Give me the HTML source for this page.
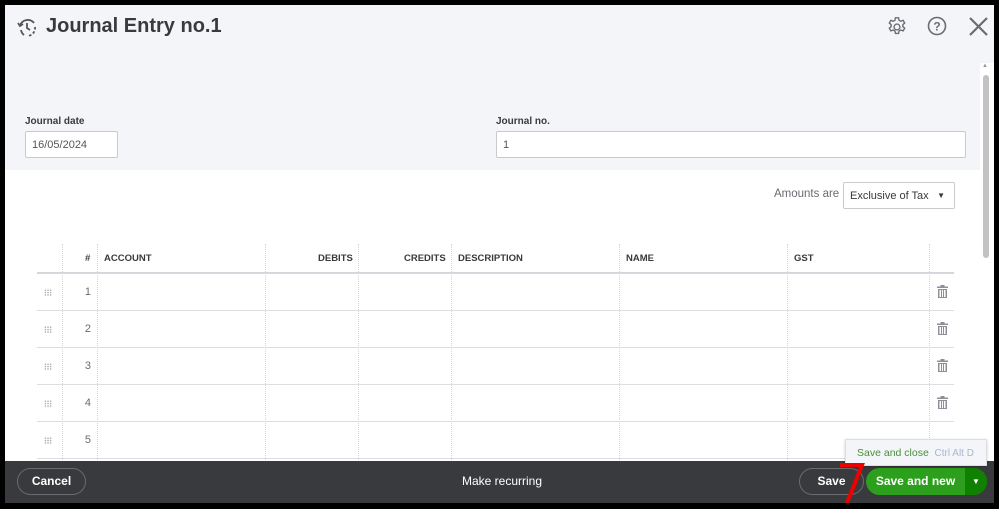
<!DOCTYPE html>
<html><head><meta charset="utf-8"><style>
*{box-sizing:border-box;margin:0;padding:0}
body{width:999px;height:509px;background:#000;position:relative;overflow:hidden;font-family:"Liberation Sans",sans-serif;color:#393a3d}
#win{position:absolute;left:5px;top:5px;width:989px;height:498px;background:#fff;overflow:hidden}
.gray{position:absolute;left:0;top:0;width:989px;height:165px;background:#f4f5f8}
.abs{position:absolute}
.lbl{font-size:10px;font-weight:bold;color:#393a3d}
.inp{position:absolute;background:#fff;border:1px solid #c9cacc;border-radius:2px;font-size:11px;color:#555;padding:7px 6px}
.th{position:absolute;top:248px;font-size:9.5px;font-weight:bold;color:#393a3d}
.vl{position:absolute;top:239px;height:220px;border-left:1px dotted #d4d7dc}
.hl{position:absolute;left:32px;width:917px;border-top:1px solid #dcdee2}
.num{position:absolute;left:64px;width:22px;text-align:right;font-size:11px;color:#6b6c72}
.grip{position:absolute;left:39px;width:8px;height:7px;background-image:radial-gradient(#999 0.6px,transparent 0.8px);background-size:2.7px 2.4px}
.trash{position:absolute;left:932px}
#foot{position:absolute;left:0;top:456px;width:989px;height:42px;background:#393a3d}
</style></head><body>
<div id="win">
<div class="gray"></div>
<div class="abs" style="left:975px;top:58px;width:14px;height:398px;background:#fff"></div>
<div class="abs" style="left:978px;top:70px;width:6px;height:183px;background:#c2c2c2;border-radius:3px"></div>
<div class="abs" style="left:977px;top:58px;font-size:6px;color:#999">▲</div>
<svg class="abs" style="left:11px;top:12px" width="22" height="22" viewBox="0 0 22 22" fill="none" stroke="#555" stroke-width="1.8"><path d="M4 9A8 8 0 0 1 18 6" /><path d="M19 10A8 8 0 0 1 12 19" stroke-dasharray="2.5 2"/><path d="M5 13A8 8 0 0 0 8 18"/><path d="M11 6v5l3 2"/><path d="M2 6l2 3 3-2"/></svg>
<div class="abs" style="left:41px;top:10px;font-size:20px;font-weight:bold;color:#393a3d">Journal Entry no.1</div>
<svg class="abs" style="left:881px;top:11px" width="22" height="22" viewBox="0 0 24 24" fill="none" stroke="#6b6c72" stroke-width="1.5"><circle cx="12" cy="12" r="3.2"/><path d="M10.3 2h3.4l.5 2.6 2 1.1 2.5-.9 1.7 2.9-2 1.7v2.2l2 1.7-1.7 2.9-2.5-.9-2 1.1-.5 2.6h-3.4l-.5-2.6-2-1.1-2.5.9-1.7-2.9 2-1.7v-2.2l-2-1.7 1.7-2.9 2.5.9 2-1.1z"/></svg>
<svg class="abs" style="left:922px;top:11px" width="20" height="20" viewBox="0 0 20 20" fill="none" stroke="#6b6c72" stroke-width="1.6"><circle cx="10" cy="10" r="8.5"/><text x="10" y="14.5" font-size="12" text-anchor="middle" fill="#6b6c72" stroke="none" font-family="Liberation Sans" font-weight="bold">?</text></svg>
<svg class="abs" style="left:963px;top:11px" width="21" height="21" viewBox="0 0 21 21" stroke="#6b6c72" stroke-width="2.2"><path d="M2 2L19 19M19 2L2 19"/></svg>

<div class="abs lbl" style="left:20px;top:111px">Journal date</div>
<div class="inp" style="left:20px;top:126px;width:93px;height:27px">16/05/2024</div>
<div class="abs lbl" style="left:491px;top:111px">Journal no.</div>
<div class="inp" style="left:491px;top:126px;width:470px;height:27px">1</div>

<div class="abs" style="left:769px;top:183px;font-size:11.5px;color:#6b6c72">Amounts are</div>
<div class="inp" style="left:838px;top:177px;width:112px;height:27px;color:#393a3d">Exclusive of Tax<span style="position:absolute;right:9px;top:8px;font-size:8px">▼</span></div>

<div class="vl" style="left:57px"></div><div class="vl" style="left:92px"></div><div class="vl" style="left:260px"></div><div class="vl" style="left:353px"></div><div class="vl" style="left:446px"></div><div class="vl" style="left:614px"></div><div class="vl" style="left:782px"></div><div class="vl" style="left:924px"></div>
<div class="th" style="left:80px">#</div>
<div class="th" style="left:99px">ACCOUNT</div>
<div class="th" style="left:313px">DEBITS</div>
<div class="th" style="left:399px">CREDITS</div>
<div class="th" style="left:453px">DESCRIPTION</div>
<div class="th" style="left:621px">NAME</div>
<div class="th" style="left:789px">GST</div>
<div class="hl" style="top:267px;border-top:2px solid #d4d7dc"></div>
<div class="hl" style="top:305px"></div><div class="hl" style="top:342px"></div><div class="hl" style="top:379px"></div><div class="hl" style="top:416px"></div><div class="hl" style="top:453px"></div>

<div class="grip" style="top:284px"></div><div class="num" style="top:281px">1</div>
<div class="grip" style="top:321px"></div><div class="num" style="top:318px">2</div>
<div class="grip" style="top:358px"></div><div class="num" style="top:355px">3</div>
<div class="grip" style="top:395px"></div><div class="num" style="top:392px">4</div>
<div class="grip" style="top:432px"></div><div class="num" style="top:429px">5</div>

<svg class="trash" style="top:280px" width="11" height="13" viewBox="0 0 11 13" fill="#8d9096"><rect x="0" y="1.5" width="11" height="1.5"/><rect x="3.5" y="0" width="4" height="1.5"/><path d="M1 4h9v9H1zM2.5 5v7h1.5V5zM5 5v7h1V5zM7 5v7h1.5V5z" fill-rule="evenodd"/></svg>
<svg class="trash" style="top:317px" width="11" height="13" viewBox="0 0 11 13" fill="#8d9096"><rect x="0" y="1.5" width="11" height="1.5"/><rect x="3.5" y="0" width="4" height="1.5"/><path d="M1 4h9v9H1zM2.5 5v7h1.5V5zM5 5v7h1V5zM7 5v7h1.5V5z" fill-rule="evenodd"/></svg>
<svg class="trash" style="top:354px" width="11" height="13" viewBox="0 0 11 13" fill="#8d9096"><rect x="0" y="1.5" width="11" height="1.5"/><rect x="3.5" y="0" width="4" height="1.5"/><path d="M1 4h9v9H1zM2.5 5v7h1.5V5zM5 5v7h1V5zM7 5v7h1.5V5z" fill-rule="evenodd"/></svg>
<svg class="trash" style="top:391px" width="11" height="13" viewBox="0 0 11 13" fill="#8d9096"><rect x="0" y="1.5" width="11" height="1.5"/><rect x="3.5" y="0" width="4" height="1.5"/><path d="M1 4h9v9H1zM2.5 5v7h1.5V5zM5 5v7h1V5zM7 5v7h1.5V5z" fill-rule="evenodd"/></svg>

<div id="foot">
<div class="abs" style="left:12px;top:7px;width:69px;height:27px;border:1px solid #6b6c72;border-radius:14px;color:#fff;font-weight:bold;font-size:12px;text-align:center;line-height:25px">Cancel</div>
<div class="abs" style="left:457px;top:13px;color:#fff;font-size:12px">Make recurring</div>
<div class="abs" style="left:794px;top:7px;width:65px;height:27px;border:1px solid #6b6c72;border-radius:14px;color:#fff;font-weight:bold;font-size:12px;text-align:center;line-height:25px">Save</div>
<div class="abs" style="left:861px;top:7px;width:121px;height:27px;background:#2ca01c;border-radius:14px;overflow:hidden">
<div class="abs" style="left:0;top:0;width:99px;height:27px;color:#fff;font-weight:bold;font-size:12px;text-align:center;line-height:27px">Save and new</div>
<div class="abs" style="left:99px;top:0;width:22px;height:27px;background:#108000;color:#fff;font-size:8px;text-align:center;line-height:27px">▼</div>
</div>
</div>
<div class="abs" style="left:840px;top:434px;width:142px;height:27px;background:#f4f5f8;border:1px solid #dcdee2;box-shadow:0 1px 3px rgba(0,0,0,.2);font-size:10.5px;padding:7px 11px;white-space:nowrap"><span style="color:#4a8f3a">Save and close</span> <span style="color:#a7b6d0;font-size:10px">&nbsp;Ctrl Alt D</span></div>
<svg class="abs" style="left:833px;top:456px" width="28" height="44" viewBox="0 0 28 44"><path d="M2 4H24L9 42" stroke="#e00" stroke-width="4" fill="none"/></svg>
</div>
</body></html>
